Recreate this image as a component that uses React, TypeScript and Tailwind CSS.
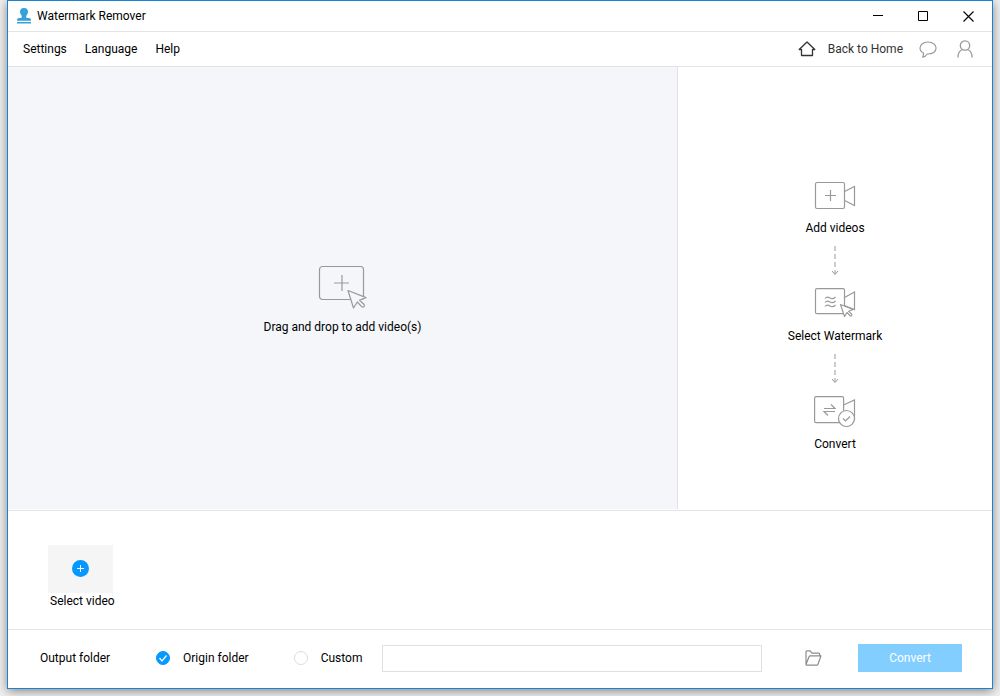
import type { ReactNode } from "react";
import { useState } from "react";

const menuItems = ["Settings", "Language", "Help"];

function StampIcon() {
  return (
    <svg width="14" height="16" viewBox="0 0 14 16" fill="#35a0da" aria-hidden="true">
      <path d="M7 0a4 4 0 0 1 4 4c0 2-1.800 3-1.800 4.800 0 .9.4 1.200 1.400 1.200H12a2 2 0 0 1 2 2v.8H0V12a2 2 0 0 1 2-2h1.400c1 0 1.400-.3 1.400-1.200C4.800 7 3 6 3 4a4 4 0 0 1 4-4Z" />
      <path d="M0 14h14v1.500H0Z" />
    </svg>
  );
}

function HomeIcon() {
  return (
    <svg width="18" height="16" viewBox="0 0 18 16" fill="none" stroke="#333" strokeWidth="1.300" aria-hidden="true">
      <path d="M3.500 8v6.500h11V8M3.500 8.500H1.200L9 1l7.800 7.500h-2.300" strokeLinejoin="round" />
    </svg>
  );
}

function ChatIcon() {
  return (
    <svg width="18" height="17" viewBox="0 0 18 17" fill="none" stroke="#999" strokeWidth="1.200" aria-hidden="true">
      <path
        d="M9 1C4.300 1 1 3.400 1 7c0 2.300 1.300 4 3.500 5 .2 1.600-.2 2.900-.8 4.200 2-.4 3.500-1.500 4.500-3.200 5.300.2 8.900-2.300 8.900-6 0-3.500-3.500-6-8.100-6Z"
        strokeLinejoin="round"
      />
    </svg>
  );
}

function UserIcon() {
  return (
    <svg width="16" height="18" viewBox="0 0 16 18" fill="none" stroke="#999" strokeWidth="1.300" aria-hidden="true">
      <circle cx="8" cy="5.500" r="4.700" />
      <path d="M1 17.500c0-4 1.800-7 4.500-8M15 17.500c0-4-1.800-7-4.500-8" />
    </svg>
  );
}

function DropIcon() {
  return (
    <svg width="49" height="44" viewBox="0 0 49 44" fill="none" stroke="#999" strokeWidth="1.200" aria-hidden="true">
      <rect x="1.500" y="1.500" width="44" height="33" rx="3" />
      <path d="M24 10v16M16 18h15" />
      <path
        d="M30 25.500l5.500 17.500 3.800-6 4.600 4.800c1.700 1 3.300-.9 2.200-2.300l-4.600-4.300 6.500-2.600Z"
        fill="#f4f6fa"
        strokeLinejoin="round"
      />
    </svg>
  );
}

function AddVideosIcon() {
  return (
    <svg width="42" height="32" viewBox="0 0 42 32" fill="none" stroke="#999" strokeWidth="1.200" aria-hidden="true">
      <rect x="1.500" y="2.500" width="29" height="26" rx="1.500" />
      <path d="M30.500 11.500l10-5v19l-10-5M16.500 10v11M11 15.500h11" />
    </svg>
  );
}

function SelectWatermarkIcon() {
  return (
    <svg width="42" height="32" viewBox="0 0 42 32" fill="none" stroke="#999" strokeWidth="1.200" aria-hidden="true">
      <rect x="1.500" y="0.700" width="29" height="25" rx="1.500" />
      <path d="M30.500 9.500l10-5.500v17.500l-10-4" />
      <path d="M11 10.500c2-2.500 3.500-1.500 5-.5s3.500 1 5.500-1M11 14.500c2-2.500 3.500-1.500 5-.5s3.500 1 5.500-1M11 18.500c2-2.500 3.500-1.500 5-.5s3.500 1 5.500-1" />
      <path
        d="M26.500 16.500l4 12 2.500-4 3 3.200c1.200.8 2.300-.5 1.600-1.500l-3-3 4.400-1.700Z"
        fill="#fff"
        strokeLinejoin="round"
      />
    </svg>
  );
}

function ConvertIcon() {
  return (
    <svg width="42" height="32" viewBox="0 0 42 32" fill="none" stroke="#999" strokeWidth="1.200" aria-hidden="true">
      <rect x="0.600" y="0.700" width="29" height="26" rx="1.500" />
      <path d="M29.500 9l11-5v20" />
      <path d="M10 12.500h11l-4-4M21 15.500H10l4 4" />
      <circle cx="32.500" cy="22.500" r="8" fill="#fff" />
      <path d="M29 22.500l2.500 2.500 4.500-4.500" />
    </svg>
  );
}

function DashedArrow() {
  return (
    <svg
      className="mt-2.5 mb-3"
      width="8"
      height="30"
      viewBox="0 0 8 30"
      fill="none"
      stroke="#999"
      aria-hidden="true"
    >
      <path d="M4 0v28" strokeDasharray="5 3" />
      <path d="M1 25l3 3.500 3-3.500" />
    </svg>
  );
}

function FolderIcon() {
  return (
    <svg width="17" height="16" viewBox="0 0 17 16" fill="none" stroke="#8c8c8c" strokeWidth="1.200" aria-hidden="true">
      <path
        d="M1 14V2C1 1.300 1.300.8 2 .8h3.200L7 3.200h6.500c.8 0 1.200.5 1.200 1.300v1.300M1 14.500L4 6.800c.2-.6.600-1 1.200-1H16l-3 8.400c-.2.600-.6 1-1.200 1H1.600c-.4 0-.6-.3-.6-.7Z"
        strokeLinejoin="round"
      />
    </svg>
  );
}

const steps = [
  { label: "Add videos", icon: <AddVideosIcon /> },
  { label: "Select Watermark", icon: <SelectWatermarkIcon /> },
  { label: "Convert", icon: <ConvertIcon /> },
];

function TitleBar() {
  return (
    <header className="flex h-[31px] shrink-0 items-center border-b border-[#e4e4e4] pl-[9px]">
      <StampIcon />
      <h1 className="ml-1.5 flex-1">Watermark Remover</h1>
      <button type="button" aria-label="Minimize" className="flex h-full w-[45px] items-center justify-center">
        <svg width="10" height="10" viewBox="0 0 10 10" stroke="#000">
          <path d="M0 4.500h10" />
        </svg>
      </button>
      <button type="button" aria-label="Maximize" className="flex h-full w-[45px] items-center justify-center">
        <svg width="10" height="10" viewBox="0 0 10 10" fill="none" stroke="#000">
          <path d="M.5.500h9v9h-9z" />
        </svg>
      </button>
      <button type="button" aria-label="Close" className="flex h-full w-[47px] items-center justify-center">
        <svg width="11" height="11" viewBox="0 0 11 11" stroke="#000" strokeWidth="1.100">
          <path d="M.5.500l10 10M10.500.500l-10 10" />
        </svg>
      </button>
    </header>
  );
}

function MenuBar() {
  return (
    <nav className="flex h-[35px] shrink-0 items-center border-b border-[#e4e4e4] pr-[19px] pl-[15px]">
      <div className="flex flex-1 gap-[18px]">
        {menuItems.map((item) => (
          <button key={item} type="button">
            {item}
          </button>
        ))}
      </div>
      <a href="#home" className="flex items-center gap-3 text-[#333]">
        <HomeIcon />
        Back to Home
      </a>
      <button type="button" aria-label="Feedback" className="ml-4">
        <ChatIcon />
      </button>
      <button type="button" aria-label="Account" className="ml-5">
        <UserIcon />
      </button>
    </nav>
  );
}

type FolderOptionProps = {
  value: string;
  selected: string;
  onSelect: (value: string) => void;
  children: ReactNode;
};

function FolderOption({ value, selected, onSelect, children }: FolderOptionProps) {
  return (
    <label className="flex items-center gap-[13px]">
      <span className="relative size-3.5">
        <input
          type="radio"
          name="folder"
          value={value}
          checked={selected === value}
          onChange={() => onSelect(value)}
          className="block size-3.5 appearance-none rounded-full border border-[#dcdcdc] bg-white checked:border-[#0598ff] checked:bg-[#0598ff]"
        />
        {selected === value && (
          <svg
            className="pointer-events-none absolute inset-0"
            width="14"
            height="14"
            viewBox="0 0 14 14"
            fill="none"
            stroke="#fff"
            strokeWidth="1.200"
          >
            <path d="M3.500 7l2.500 3 4.500-5.500" />
          </svg>
        )}
      </span>
      {children}
    </label>
  );
}

export default function App() {
  const [folder, setFolder] = useState("origin");

  return (
    <div className="flex min-h-screen flex-col bg-[#f0f0f0] px-[7px] pb-[7px] font-['Roboto','Open_Sans',sans-serif] text-xs leading-4 text-black">
      <div className="flex flex-1 flex-col border border-[#1883d7] bg-white shadow-[0_2px_10px_rgba(0,0,0,0.45)]">
        <TitleBar />
        <MenuBar />

        <main className="flex flex-1 border-b border-[#e4e4e4] pb-px">
          <section className="flex flex-1 flex-col items-center justify-center border-r border-[#e4e4e4] bg-[#f4f6fa] pt-[23px]">
            <DropIcon />
            <p className="mt-2.5">Drag and drop to add video(s)</p>
          </section>
          <aside className="flex w-[314px] flex-col items-center justify-center pt-14">
            {steps.map((step, index) => (
              <div key={step.label} className="flex flex-col items-center">
                {step.icon}
                <p className="mt-2">{step.label}</p>
                {index < steps.length - 1 && <DashedArrow />}
              </div>
            ))}
          </aside>
        </main>

        <section className="flex h-[119px] shrink-0 border-b border-[#e4e4e4] px-10 pt-[34px]">
          <button type="button" className="flex flex-col items-start whitespace-nowrap">
            <span className="flex h-12 w-[65px] items-center justify-center bg-[#f5f5f5] pb-0.5">
              <svg width="17" height="17" viewBox="0 0 17 17" fill="none" stroke="#fff" aria-hidden="true">
                <circle cx="8.500" cy="8.500" r="8.500" fill="#0598ff" stroke="none" />
                <path d="M8.500 5v7M5 8.500h7" />
              </svg>
            </span>
            <span className="pl-0.5">Select video</span>
          </button>
        </section>

        <footer className="flex h-[58px] shrink-0 items-center pr-[30px] pb-0.5 pl-8">
          <fieldset className="flex items-center">
            <legend className="float-left w-[116px]">Output folder</legend>
            <div className="flex gap-[45px]">
              <FolderOption value="origin" selected={folder} onSelect={setFolder}>
                Origin folder
              </FolderOption>
              <FolderOption value="custom" selected={folder} onSelect={setFolder}>
                Custom
              </FolderOption>
            </div>
          </fieldset>
          <input
            type="text"
            aria-label="Custom folder path"
            className="ml-5 h-[27px] min-w-0 flex-1 border border-[#e0e0e0] px-2"
          />
          <button type="button" aria-label="Browse folder" className="mr-9 ml-[43px]">
            <FolderIcon />
          </button>
          <button type="button" className="h-7 w-[104px] bg-[#82ceff] text-white">
            Convert
          </button>
        </footer>
      </div>
    </div>
  );
}
